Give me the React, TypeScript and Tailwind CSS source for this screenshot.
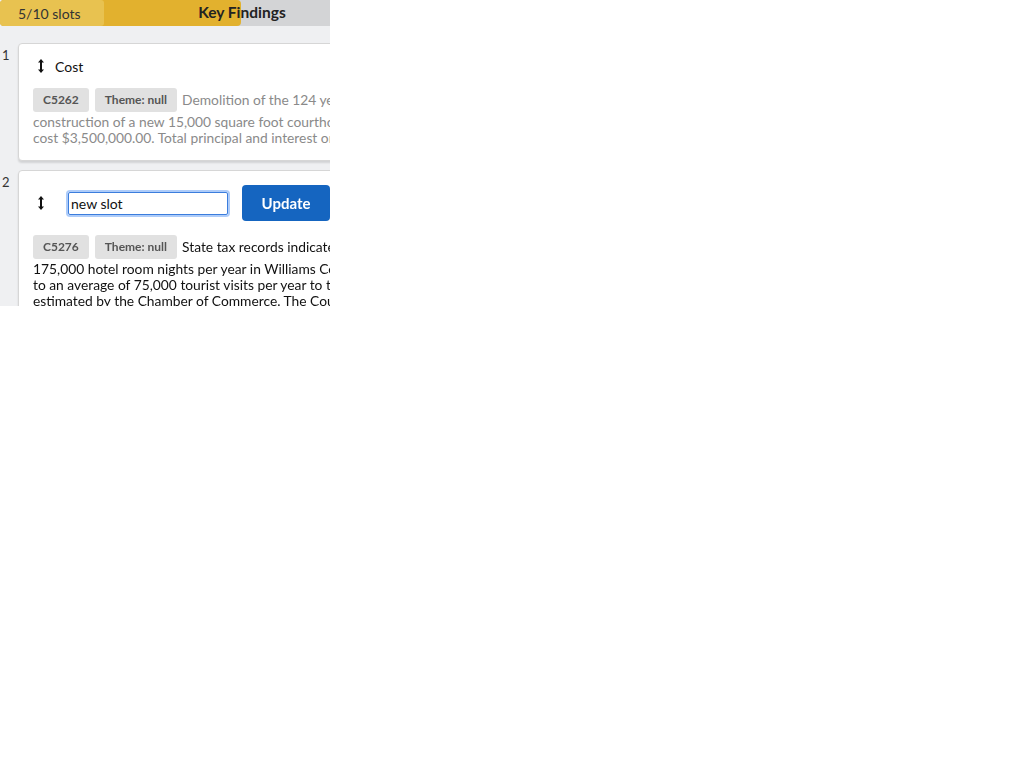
import { useEffect, useRef } from "react";

type Finding = {
  code: string;
  theme: string;
  lines: string[];
};

const findings: Finding[] = [
  {
    code: "C5262",
    theme: "null",
    lines: [
      "Demolition of the 124 year old courthouse and",
      "construction of a new 15,000 square foot courthouse. Estimated",
      "cost $3,500,000.00. Total principal and interest on the bonds",
    ],
  },
  {
    code: "C5276",
    theme: "null",
    lines: [
      "State tax records indicate there are approximately",
      "175,000 hotel room nights per year in Williams County, which",
      "to an average of 75,000 tourist visits per year to the county as",
      "estimated by the Chamber of Commerce. The County",
    ],
  },
];

function DragIcon() {
  return (
    <svg width="6" height="14" viewBox="0 0 6 14" className="block">
      <path d="M3 0 L6 3.5 L0 3.5 Z" fill="#111" />
      <rect x="2" y="3" width="2" height="8" fill="#111" />
      <path d="M3 14 L6 10.5 L0 10.5 Z" fill="#111" />
    </svg>
  );
}

function Chips({ code, theme }: { code: string; theme: string }) {
  return (
    <>
      <span className="flex h-[24px] items-center rounded-[3px] bg-[#e1e1e1] px-[10px] text-[12px] font-bold text-[#555]">
        {code}
      </span>
      <span className="ml-[6px] flex h-[24px] items-center rounded-[3px] bg-[#e1e1e1] px-[10px] text-[12px] font-bold text-[#555]">
        Theme: {theme}
      </span>
    </>
  );
}

function Body({ item, muted }: { item: Finding; muted?: boolean }) {
  const color = muted ? "text-[#8a8a8a]" : "text-[#111]";
  return (
    <div className={`mt-[14px] text-[13.8px] ${color}`}>
      <div className="flex h-[26px] items-start whitespace-nowrap">
        <Chips code={item.code} theme={item.theme} />
        <span className="ml-[5px] leading-[24px]">{item.lines[0]}</span>
      </div>
      {item.lines.slice(1).map((line) => (
        <div key={line} className="h-[16px] whitespace-nowrap leading-[16px]">
          {line}
        </div>
      ))}
    </div>
  );
}

function Slot({ index, children }: { index: number; children: React.ReactNode }) {
  return (
    <div className="flex">
      <div className="w-[18px] shrink-0 pl-[2px] pt-[3px] text-[13px] text-[#333]">{index}</div>
      <div className="min-w-0 flex-1 overflow-hidden rounded-[4px] border border-[#d6d6d6] bg-white px-[14px] pb-[14px] pt-[14px] shadow-[0_2px_2px_rgba(0,0,0,0.12)]">
        {children}
      </div>
    </div>
  );
}

export default function App() {
  const inputRef = useRef<HTMLInputElement>(null);

  useEffect(() => {
    const el = inputRef.current;
    if (el) {
      el.focus();
      el.setSelectionRange(el.value.length, el.value.length);
    }
  }, []);

  return (
    <div className="h-[778px] w-[1034px] bg-white font-['Lato',sans-serif]">
      <div className="h-[306px] w-[330px] overflow-hidden bg-[#eff0f2]">
        <div className="w-[484px]">
          <div className="relative h-[26px] overflow-hidden rounded-[4px] bg-[#d3d4d6]">
            <div className="absolute left-0 top-0 h-full w-[241px] rounded-r-[4px] bg-[#e2b12e]" />
            <div className="absolute left-0 top-0 h-full w-[104px] rounded-r-[3px] bg-[#e8c250]" />
            <div className="relative flex h-full items-center pl-[18px] text-[14px] text-[#333]">
              5/10 slots
            </div>
            <div className="absolute inset-0 flex items-center justify-center text-[15.5px] font-bold text-[#222]">
              Key Findings
            </div>
          </div>

          <div className="mt-[17px] flex flex-col gap-[9px]">
            <Slot index={1}>
              <div className="flex h-[16px] items-center">
                <div className="flex w-[15px] justify-center">
                  <DragIcon />
                </div>
                <span className="ml-[7px] text-[14px] text-[#111]">Cost</span>
              </div>
              <Body item={findings[0]} muted />
            </Slot>

            <Slot index={2}>
              <div className="flex h-[36px] items-center">
                <div className="flex w-[15px] shrink-0 justify-center">
                  <DragIcon />
                </div>
                <input
                  ref={inputRef}
                  defaultValue="new slot"
                  className="ml-[20px] h-[23px] w-[160px] shrink-0 rounded-[2px] border border-[#3b7ddd] px-[2px] text-[14px] text-[#111] shadow-[0_0_0_2px_rgba(120,170,245,0.6)] outline-none"
                />
                <button
                  type="button"
                  className="ml-[14px] h-[36px] w-[88px] shrink-0 rounded-[4px] bg-[#1565c0] text-[15px] font-bold text-white"
                >
                  Update
                </button>
              </div>
              <Body item={findings[1]} />
            </Slot>
          </div>
        </div>
      </div>
    </div>
  );
}
